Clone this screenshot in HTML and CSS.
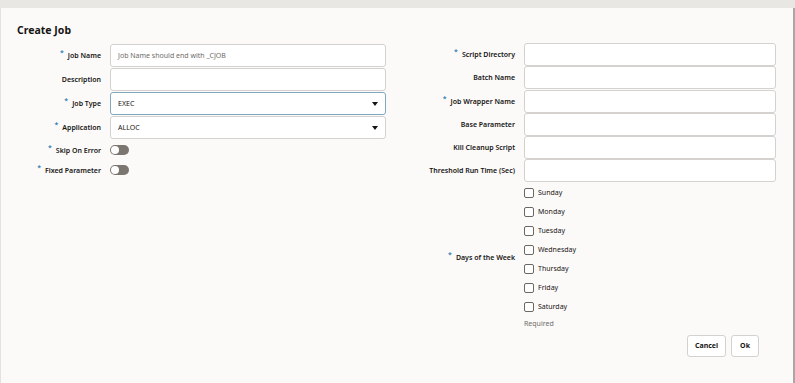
FILE: index.html
```html
<!DOCTYPE html>
<html lang="en">
<head>
  <meta charset="UTF-8">
  <title>Create Job</title>
  <link rel="stylesheet" href="styles.css">
</head>
<body>
  <!-- top strip -->
  <div class="topbar"></div>

  <div class="panel">
    <h1 class="title">Create Job</h1>

    <div class="form">
      <!-- left column -->
      <div class="col col-left">
        <div class="row">
          <label class="req">Job Name</label>
          <div class="input placeholder">Job Name should end with _CJOB</div>
        </div>
        <div class="row">
          <label>Description</label>
          <div class="input"></div>
        </div>
        <div class="row">
          <label class="req">Job Type</label>
          <div class="input select focused">EXEC<span class="caret"></span></div>
        </div>
        <div class="row">
          <label class="req">Application</label>
          <div class="input select">ALLOC<span class="caret"></span></div>
        </div>
        <div class="row row-switch">
          <label class="req">Skip On Error</label>
          <div><span class="switch"></span></div>
        </div>
        <div class="row row-switch">
          <label class="req">Fixed Parameter</label>
          <div><span class="switch"></span></div>
        </div>
      </div>

      <!-- right column -->
      <div class="col col-right">
        <div class="row">
          <label class="req">Script Directory</label>
          <div class="input"></div>
        </div>
        <div class="row">
          <label>Batch Name</label>
          <div class="input"></div>
        </div>
        <div class="row">
          <label class="req">Job Wrapper Name</label>
          <div class="input"></div>
        </div>
        <div class="row">
          <label>Base Parameter</label>
          <div class="input"></div>
        </div>
        <div class="row">
          <label>Kill Cleanup Script</label>
          <div class="input"></div>
        </div>
        <div class="row">
          <label>Threshold Run Time (Sec)</label>
          <div class="input"></div>
        </div>
        <div class="row row-days">
          <label class="req">Days of the Week</label>
          <div class="days">
            <div class="day"><span class="box"></span>Sunday</div>
            <div class="day"><span class="box"></span>Monday</div>
            <div class="day"><span class="box"></span>Tuesday</div>
            <div class="day"><span class="box"></span>Wednesday</div>
            <div class="day"><span class="box"></span>Thursday</div>
            <div class="day"><span class="box"></span>Friday</div>
            <div class="day"><span class="box"></span>Saturday</div>
            <div class="hint">Required</div>
          </div>
        </div>
      </div>
    </div>

    <div class="actions">
      <button class="btn">Cancel</button>
      <button class="btn btn-ok">Ok</button>
    </div>
  </div>
</body>
</html>
```

FILE: styles.css
```css
* {
  margin: 0;
  padding: 0;
  box-sizing: border-box;
}

body {
  font-family: 'Noto Sans', sans-serif;
  background: #fcfaf9;
  color: #161513;
  width: 795px;
  height: 383px;
  overflow: hidden;
}

/* top strip */
.topbar {
  height: 8px;
  background: #e9e7e4;
}

.panel {
  height: 375px;
  width: 795px;
  border-left: 1px solid #e4e1de;
  border-right: 2px solid #a9a6a3;
  padding-top: 15px;
}

.title {
  font-size: 10.5px;
  font-weight: 700;
  line-height: 14px;
  margin: 0 0 6px 16px;
}

.form {
  display: flex;
}

.col-left {
  width: 399px;
  padding-top: 1px;
}

.col-right {
  width: 392px;
}

.row {
  display: grid;
  align-items: center;
  column-gap: 9px;
  margin-bottom: 1px;
}

.col-left .row {
  grid-template-columns: 100px 276px;
}

.col-right .row {
  grid-template-columns: 115px 252px;
  margin-bottom: 0.3px;
}

label {
  font-size: 7px;
  font-weight: 600;
  text-align: right;
  color: #161513;
}

label.req::before {
  content: '*';
  color: #2f7fb5;
  font-size: 7px;
  position: relative;
  top: -3px;
  margin-right: 4px;
}

.input {
  height: 23px;
  background: #fff;
  border: 1px solid #d4d1ce;
  border-radius: 3px;
  font-size: 7px;
  line-height: 21px;
  padding: 0 7px;
  position: relative;
  color: #161513;
}

.input.placeholder {
  color: #6f6c69;
}

.input.focused {
  border-color: #7fa8bd;
}

.caret {
  position: absolute;
  right: 7px;
  top: 9px;
  border-left: 3.5px solid transparent;
  border-right: 3.5px solid transparent;
  border-top: 4px solid #161513;
}

/* switches */
.row-switch {
  height: 20px;
  margin-bottom: 0;
}

.switch {
  display: block;
  width: 19px;
  height: 10px;
  border-radius: 5px;
  background: #7b7670;
  position: relative;
}

.switch::after {
  content: '';
  position: absolute;
  left: 1px;
  top: 1px;
  width: 8px;
  height: 8px;
  border-radius: 50%;
  background: #fff;
}

/* days of week */
.row-days {
  margin-top: 1px;
}

.days {
  font-size: 7px;
}

.day {
  display: flex;
  align-items: center;
  height: 19px;
}

.box {
  width: 10px;
  height: 10px;
  border: 1px solid #6b6762;
  border-radius: 2px;
  background: #fff;
  margin-right: 4px;
}

.hint {
  color: #6f6c69;
  height: 14px;
  line-height: 14px;
  margin-top: 1px;
}

/* buttons */
.actions {
  display: flex;
  justify-content: flex-end;
  gap: 5px;
  padding-right: 34px;
  margin-top: 3px;
}

.btn {
  height: 22px;
  padding: 0 7px;
  background: #fff;
  border: 1px solid #d4d1ce;
  border-radius: 3px;
  font-family: 'Noto Sans', sans-serif;
  font-size: 7px;
  font-weight: 700;
  color: #161513;
}

.btn-ok {
  padding: 0 8px;
}
```
